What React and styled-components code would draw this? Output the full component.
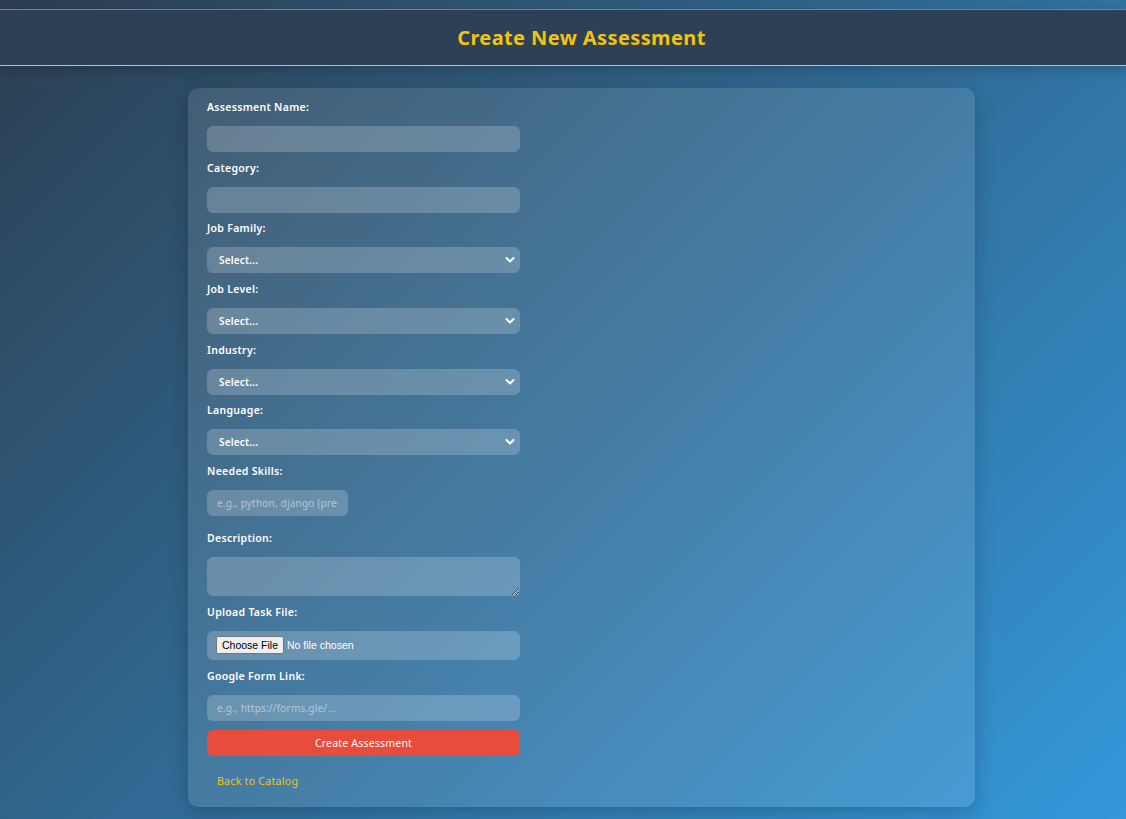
import React from "react";
import styled, { createGlobalStyle } from "styled-components";

const GlobalStyle = createGlobalStyle`
  html, body {
    margin: 0;
    padding: 0;
  }
  body {
    min-height: 100vh;
    font-family: "Noto Sans", "Open Sans", sans-serif;
    background: linear-gradient(135deg, #2c3e50 0%, #3498db 100%);
    background-attachment: fixed;
    color: #fff;
  }
`;

const Page = styled.div`
  padding-top: 9px;
  padding-bottom: 13px;
`;

const Header = styled.header`
  background-color: #2d4056;
  border-top: 1px solid rgba(255, 255, 255, 0.35);
  border-bottom: 1px solid #f1c40f;
  box-shadow: 0 4px 12px rgba(0, 0, 0, 0.2);
  height: 57px;
  box-sizing: border-box;
  padding-left: 37px;
  display: flex;
  align-items: center;
  justify-content: center;
`;

const Title = styled.h1`
  margin: 0;
  font-size: 20px;
  font-weight: 700;
  color: #f1c40f;
  letter-spacing: 0.4px;
`;

const Card = styled.form`
  width: 787px;
  box-sizing: border-box;
  margin: 22px 0 0 188px;
  padding: 12px 19px 17px;
  background: rgba(255, 255, 255, 0.1);
  border-radius: 10px;
  box-shadow: 0 6px 20px rgba(0, 0, 0, 0.2);
`;

const Group = styled.div`
  margin-bottom: ${({ $mb }) => ($mb != null ? $mb : 8.67)}px;
`;

const Label = styled.label`
  display: block;
  font-size: 10.5px;
  font-weight: 600;
  letter-spacing: 0.3px;
  line-height: 14px;
  margin-bottom: 12px;
  color: #fff;
`;

const fieldBase = `
  box-sizing: border-box;
  border: none;
  outline: none;
  border-radius: 6px;
  background: rgba(255, 255, 255, 0.2);
  color: #fff;
  font-family: "Noto Sans", "Open Sans", sans-serif;
  font-size: 10px;
  letter-spacing: 0.2px;
  padding: 0 10px;
  &::placeholder {
    color: rgba(255, 255, 255, 0.5);
  }
`;

const Input = styled.input`
  ${fieldBase}
  display: block;
  width: ${({ $w }) => $w || 313}px;
  height: 26px;
`;

const TextArea = styled.textarea`
  ${fieldBase}
  display: block;
  width: 313px;
  height: 39px;
  padding: 6px 10px;
  resize: vertical;
`;

const SelectWrap = styled.div`
  position: relative;
  width: 313px;
`;

const Select = styled.select`
  ${fieldBase}
  appearance: none;
  -webkit-appearance: none;
  display: block;
  width: 100%;
  height: 26px;
  padding: 0 12px;
  font-weight: 600;
  option {
    color: #000;
  }
`;

const Chevron = styled.svg`
  position: absolute;
  right: 5px;
  top: 8px;
  pointer-events: none;
`;

const FileBox = styled.div`
  box-sizing: border-box;
  width: 313px;
  height: 29px;
  border-radius: 6px;
  background: rgba(255, 255, 255, 0.2);
  display: flex;
  align-items: center;
  padding: 0 9px;
`;

const FileInput = styled.input`
  font-family: "Liberation Sans", Arial, sans-serif;
  font-size: 10.5px;
  color: #fff;
  &::file-selector-button {
    font-family: "Liberation Sans", Arial, sans-serif;
    font-size: 10.5px;
    padding: 1px 4px;
    margin-right: 3px;
  }
`;

const SubmitButton = styled.button`
  display: block;
  width: 313px;
  height: 26px;
  border: none;
  border-radius: 6px;
  background: #e74c3c;
  color: #fff;
  font-family: "Noto Sans", "Open Sans", sans-serif;
  font-size: 10.5px;
  letter-spacing: 0.2px;
  cursor: pointer;
`;

const BackLink = styled.a`
  display: inline-block;
  margin-top: 19px;
  padding-left: 10px;
  font-size: 10.5px;
  letter-spacing: 0.3px;
  line-height: 12px;
  color: #f1c40f;
  text-decoration: none;
`;

const SelectField = ({ label, name }) => (
  <Group>
    <Label htmlFor={name}>{label}</Label>
    <SelectWrap>
      <Select id={name} name={name} defaultValue="">
        <option value="">Select...</option>
      </Select>
      <Chevron width="10" height="10" viewBox="0 0 10 10">
        <path
          d="M1.5 3 L5 6.5 L8.5 3"
          fill="none"
          stroke="#fff"
          strokeWidth="2"
          strokeLinecap="round"
          strokeLinejoin="round"
        />
      </Chevron>
    </SelectWrap>
  </Group>
);

export default function App() {
  return (
    <>
      <GlobalStyle />
      <Page>
        <Header>
          <Title>Create New Assessment</Title>
        </Header>
        <Card onSubmit={(e) => e.preventDefault()}>
          <Group>
            <Label htmlFor="name">Assessment Name:</Label>
            <Input id="name" />
          </Group>
          <Group>
            <Label htmlFor="category">Category:</Label>
            <Input id="category" />
          </Group>
          <SelectField label="Job Family:" name="family" />
          <SelectField label="Job Level:" name="level" />
          <SelectField label="Industry:" name="industry" />
          <SelectField label="Language:" name="language" />
          <Group $mb={15}>
            <Label htmlFor="skills">Needed Skills:</Label>
            <Input id="skills" $w={141} placeholder="e.g., python, django (press Enter)" />
          </Group>
          <Group $mb={9}>
            <Label htmlFor="description">Description:</Label>
            <TextArea id="description" />
          </Group>
          <Group $mb={9}>
            <Label htmlFor="file">Upload Task File:</Label>
            <FileBox>
              <FileInput id="file" type="file" />
            </FileBox>
          </Group>
          <Group $mb={9}>
            <Label htmlFor="link">Google Form Link:</Label>
            <Input id="link" placeholder="e.g., https://forms.gle/..." />
          </Group>
          <SubmitButton type="submit">Create Assessment</SubmitButton>
          <BackLink href="#">Back to Catalog</BackLink>
        </Card>
      </Page>
    </>
  );
}
